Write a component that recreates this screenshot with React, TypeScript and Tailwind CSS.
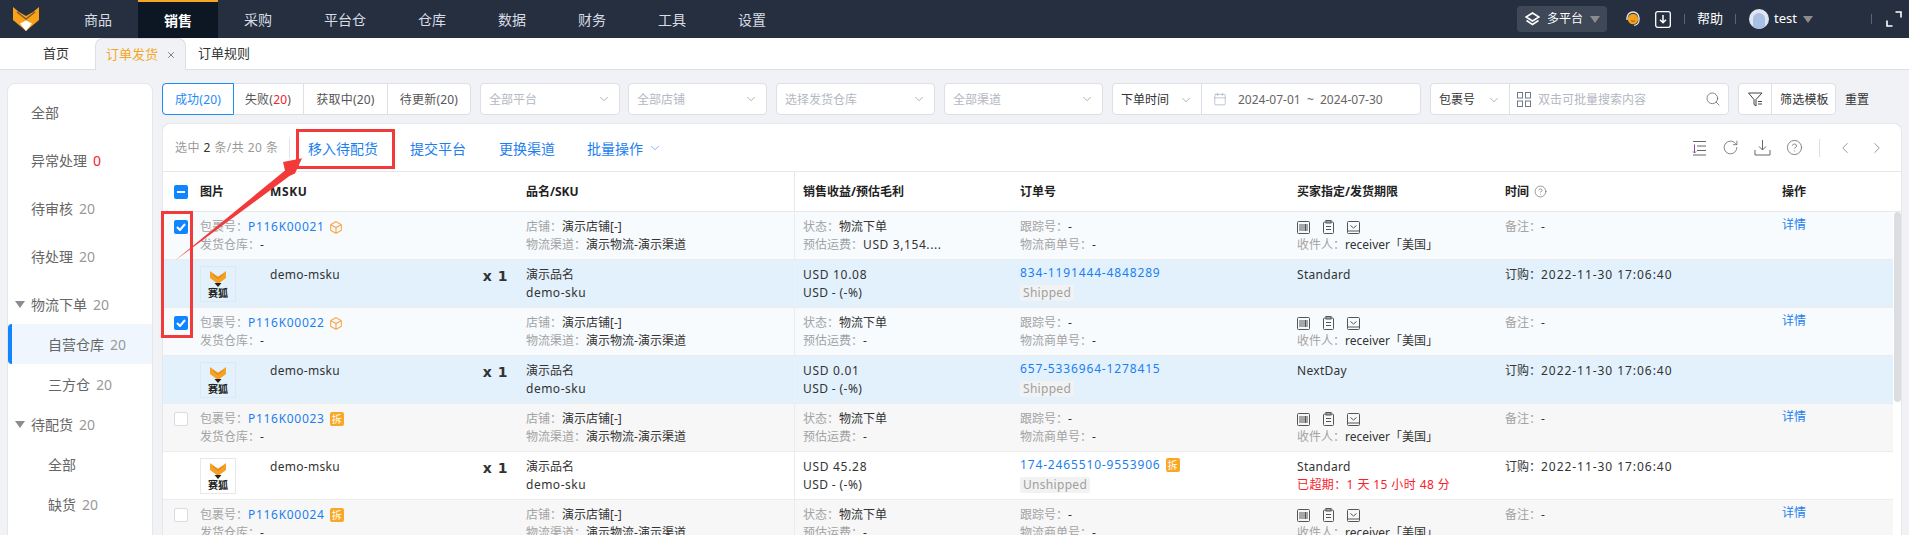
import React from "react";
import { ChevronDown, ChevronLeft, ChevronRight, Search, Calendar, RotateCw, CircleHelp, X } from "lucide-react";

const font = { fontFamily: '"Noto Sans", "Noto Sans CJK SC", sans-serif' };

function Fox() {
  return (
    <svg width="26" height="24" viewBox="0 0 26 24">
      <path d="M0 0L6 5L13 9L20 5L26 0V13L13 24L0 13Z" fill="#f9a11b" />
      <path d="M4 5L13 12L22 5" fill="none" stroke="#7d5a2a" strokeWidth="1.4" />
      <path d="M7 16.5L13 13.5L19 16.5L13 24Z" fill="#fff" />
    </svg>
  );
}

function SmallFox() {
  return (
    <svg width="16" height="16" viewBox="0 0 16 16">
      <path d="M0 0L4 3L8 5.5L12 3L16 0V7L8 13L0 7Z" fill="#f7a023" />
      <path d="M2.5 3L8 7.5L13.5 3" fill="none" stroke="#c9801c" strokeWidth="0.8" />
      <path d="M4.5 12H11.5L8 16Z" fill="#222" />
    </svg>
  );
}

function Caret({ color = "#8c8c8c", size = 10 }: { color?: string; size?: number }) {
  return (
    <svg width={size} height={size * 0.7} viewBox="0 0 10 7">
      <path d="M0 0H10L5 7Z" fill={color} />
    </svg>
  );
}

const navItems = ["商品", "销售", "采购", "平台仓", "仓库", "数据", "财务", "工具", "设置"];

function TopBar() {
  return (
    <div className="h-[38px] bg-[#252f40] flex items-center shrink-0">
      <div className="w-[58px] h-full flex items-center pl-[13px] shrink-0">
        <Fox />
      </div>
      {navItems.map((n) => (
        <div
          key={n}
          className={
            n === "销售"
              ? "h-full px-[26px] flex items-center text-[14px] font-bold text-white bg-[#0d1724] border-t-2 border-[#f5a623]"
              : "h-full px-[26px] flex items-center text-[14px] text-[#d8dce3]"
          }
        >
          {n}
        </div>
      ))}
      <div className="flex-1" />
      <div className="w-[90px] h-[26px] rounded bg-[#3f4857] flex items-center pl-2 gap-[7px] text-[12px] text-white">
        <svg width="15" height="15" viewBox="0 0 15 15" fill="none" stroke="#fff" strokeWidth="1.6">
          <path d="M7.5 1L14 5L7.5 9L1 5Z" />
          <path d="M1.5 8.5L7.5 12.5L13.5 8.5" />
          <path d="M4.5 7.5V6.5" />
        </svg>
        <span>多平台</span>
        <Caret />
      </div>
      <svg className="ml-[18px]" width="16" height="18" viewBox="0 0 16 18" fill="none">
        <circle cx="8" cy="9" r="5.2" fill="#f5a01c" />
        <path d="M2 10V8a6 6 0 0 1 12 0v2" stroke="#e8e8e8" strokeWidth="1.4" />
        <path d="M14 10c0 3-2 5-5 5.5" stroke="#e8e8e8" strokeWidth="1.2" />
        <path d="M6 10.5c1 1 3 1 4 0" stroke="#7a4a00" strokeWidth="0.8" />
      </svg>
      <svg className="ml-[14px]" width="16" height="17" viewBox="0 0 16 17" fill="none" stroke="#fff">
        <rect x="0.7" y="0.7" width="14.6" height="15.6" rx="2" strokeWidth="1.3" />
        <path d="M8 4V11.5M5 8.7L8 11.7L11 8.7" strokeWidth="1.5" />
      </svg>
      <div className="ml-[13px] w-px h-[10px] bg-[#5a6473]" />
      <span className="ml-3 text-[13px] text-white">帮助</span>
      <div className="ml-3 w-px h-[10px] bg-[#5a6473]" />
      <div className="ml-[13px] w-[20px] h-[20px] rounded-full bg-[#dfe6f2] flex items-end justify-center overflow-hidden">
        <div className="w-3 h-[16px] rounded-t-full bg-[#a9c0e4]" />
      </div>
      <span className="ml-[5px] text-[13px] text-white">test</span>
      <span className="ml-[6px]">
        <Caret />
      </span>
      <div className="ml-[58px] w-px h-[10px] bg-[#5a6473]" />
      <svg className="ml-[14px] mr-[7px]" width="16" height="16" viewBox="0 0 16 16" fill="none" stroke="#fff" strokeWidth="1.6">
        <path d="M9.5 1H15V6.5M1 9.5V15H6.5" />
      </svg>
    </div>
  );
}

function Tabs() {
  return (
    <div className="h-[32px] bg-white border-b border-[#dcdfe6] flex items-end text-[13px] text-[#333] shrink-0">
      <div className="w-[95px] h-full flex items-center pl-[43px] pt-px">首页</div>
      <div className="w-[91px] h-[32px] -mb-px border border-b-0 border-[#dcdfe6] rounded-t-lg bg-[#f1f2f6] flex items-center pl-[10px] pt-px gap-[8px] text-[#f5a623]">
        <span>订单发货</span>
        <X size={10} color="#666" strokeWidth={2} />
      </div>
      <div className="h-full flex items-center pl-3 pt-px">订单规则</div>
    </div>
  );
}

const side: { t: string; n: string; lv: number; tri?: boolean; red?: boolean; active?: boolean }[] = [
  { t: "全部", n: "", lv: 0 },
  { t: "异常处理", n: "0", lv: 0, red: true },
  { t: "待审核", n: "20", lv: 0 },
  { t: "待处理", n: "20", lv: 0 },
  { t: "物流下单", n: "20", lv: 0, tri: true },
  { t: "自营仓库", n: "20", lv: 1, active: true },
  { t: "三方仓", n: "20", lv: 1 },
  { t: "待配货", n: "20", lv: 0, tri: true },
  { t: "全部", n: "", lv: 1 },
  { t: "缺货", n: "20", lv: 1 },
];

function Sidebar() {
  return (
    <div className="w-[146px] shrink-0 h-[500px] bg-white border border-[#e6e7eb] rounded-t-lg pt-[4px] text-[14px] text-[#666]">
      {side.map((s, i) => (
        <div
          key={i}
          className={
            (i < 4 ? "h-[48px] " : i === 4 ? "h-[44px] pt-[4px] " : "h-[40px] ") +
            (s.active ? "bg-[#eff6fd] border-l-4 border-[#0f86ff] rounded-l-sm pl-[36px] " : s.lv ? "pl-[40px] " : s.tri ? "pl-[7px] " : "pl-[23px] ") +
            "flex items-center"
          }
        >
          {s.tri && (
            <span className="mr-[6px]">
              <Caret size={10} />
            </span>
          )}
          <span>{s.t}</span>
          {s.n && <span className={s.red ? "ml-[6px] text-[#f5222d]" : "ml-[6px] text-[#999]"}>{s.n}</span>}
        </div>
      ))}
    </div>
  );
}

function Select({ label, w, dark }: { label: string; w: string; dark?: boolean }) {
  return (
    <div className={w + " h-8 bg-white border border-[#dcdfe6] rounded flex items-center justify-between px-2 text-[12px] shrink-0"}>
      <span className={"pt-px " + (dark ? "text-[#333]" : "text-[#b4b8bf]")}>{label}</span>
      <ChevronDown size={14} color="#9a9a9a" strokeWidth={1.3} />
    </div>
  );
}

function Filters() {
  const seg = [
    { a: "成功(", b: "20", c: ")", w: "w-[72px]", on: true },
    { a: "失败(", b: "20", c: ")", w: "w-[70px]", red: true },
    { a: "获取中(", b: "20", c: ")", w: "w-[84px]" },
    { a: "待更新(", b: "20", c: ")", w: "w-[83px]" },
  ];
  return (
    <div className="h-8 flex items-center text-[12px] shrink-0">
      <div className="flex h-8 bg-white rounded border border-[#dcdfe6] w-[309px] shrink-0">
        {seg.map((s, i) => (
          <div
            key={i}
            className={
              s.w +
              " flex items-center justify-center pt-px tracking-[0.2px] " +
              (s.on ? "-m-px h-8 border border-[#1c8cf7] rounded-l text-[#1c8cf7] " : "border-l border-[#dcdfe6] text-[#555] ") +
              (i === 1 ? "border-l-0 " : "")
            }
          >
            {s.a}
            <span className={s.red ? "text-[#f5222d]" : ""}>{s.b}</span>
            {s.c}
          </div>
        ))}
      </div>
      <div className="ml-[9px]">
        <Select label="全部平台" w="w-[140px]" />
      </div>
      <div className="ml-[8px]">
        <Select label="全部店铺" w="w-[139px]" />
      </div>
      <div className="ml-[9px]">
        <Select label="选择发货仓库" w="w-[159px]" />
      </div>
      <div className="ml-[9px]">
        <Select label="全部渠道" w="w-[159px]" />
      </div>
      <div className="ml-[9px] w-[309px] h-8 bg-white border border-[#dcdfe6] rounded flex shrink-0 items-center">
        <div className="w-[89px] h-full flex items-center justify-between px-2 pt-px border-r border-[#dcdfe6] text-[#333]">
          <span>下单时间</span>
          <ChevronDown size={14} color="#9a9a9a" strokeWidth={1.3} />
        </div>
        <Calendar className="ml-[11px]" size={14} color="#9fb0bf" strokeWidth={1.2} />
        <span className="ml-[11px] pt-px text-[#666] whitespace-nowrap">2024-07-01&nbsp; ~&nbsp; 2024-07-30</span>
      </div>
      <div className="ml-[9px] w-[299px] h-8 bg-white border border-[#dcdfe6] rounded flex shrink-0 items-center">
        <div className="w-[79px] h-full flex items-center justify-between px-2 pt-px border-r border-[#dcdfe6] text-[#333]">
          <span>包裹号</span>
          <ChevronDown size={14} color="#9a9a9a" strokeWidth={1.3} />
        </div>
        <svg className="ml-[7px]" width="14" height="15" viewBox="0 0 14 15" fill="none" stroke="#6f7a8a">
          <rect x="0.5" y="0.5" width="5" height="5.5" />
          <rect x="8.5" y="0.5" width="5" height="5.5" />
          <rect x="0.5" y="9" width="5" height="5.5" />
          <rect x="8.5" y="9" width="5" height="5.5" />
        </svg>
        <span className="ml-[7px] pt-px text-[#b4b8bf] flex-1">双击可批量搜索内容</span>
        <Search className="mr-[7px]" size={16} color="#666" strokeWidth={1.2} />
      </div>
      <div className="ml-[9px] w-[98px] h-8 bg-white border border-[#dcdfe6] rounded flex shrink-0 items-center">
        <div className="w-[33px] h-full flex items-center justify-center border-r border-[#dcdfe6]">
          <svg width="15" height="15" viewBox="0 0 15 15" fill="none" stroke="#444">
            <path d="M0.5 1H14L8 7.5V14L6 12.5V7.5Z" />
            <path d="M10 9.5H14M10 12H14" />
          </svg>
        </div>
        <span className="pl-2 pt-px text-[#333] tracking-[0.2px]">筛选模板</span>
      </div>
      <span className="ml-[9px] pt-px text-[#333]">重置</span>
    </div>
  );
}

function Toolbar() {
  const link = "text-[#1c7ff0] text-[14px] whitespace-nowrap pt-px";
  return (
    <div className="h-[48px] border-b border-[#e8e8e8] flex items-center text-[12px] shrink-0">
      <span className="ml-[12px] pt-px text-[#999] w-[114px] whitespace-nowrap tracking-[0.45px]">
        选中 <span className="text-[#333]">2</span> 条/共 20 条
      </span>
      <div className="w-px h-[20px] bg-[#e5e5e5]" />
      <span className={"ml-[18px] w-[70px] " + link}>移入待配货</span>
      <span className={"ml-[32px] w-[56px] " + link}>提交平台</span>
      <span className={"ml-[33px] w-[56px] " + link}>更换渠道</span>
      <span className={"ml-[32px] w-[56px] " + link}>批量操作</span>
      <ChevronDown className="ml-[5px]" size={14} color="#5a9bf0" strokeWidth={1.3} />
      <div className="flex-1" />
      <svg width="15" height="16" viewBox="0 0 15 16" fill="none" stroke="#666">
        <path d="M1 1.5H14M5 6H14M5 10.5H14M1 15H14" />
        <path d="M2.5 4.5V13M1 11.5L2.5 13L4 11.5" stroke="#8a4a9a" />
      </svg>
      <RotateCw className="ml-[15px]" size={17} color="#666" strokeWidth={1.1} />
      <svg className="ml-[15px]" width="17" height="17" viewBox="0 0 17 17" fill="none" stroke="#666">
        <path d="M8.5 1V11M5 7.5L8.5 11L12 7.5" />
        <path d="M1 11V16H16V11" />
      </svg>
      <CircleHelp className="ml-[15px]" size={17} color="#666" strokeWidth={1.1} />
      <div className="ml-[16px] w-px h-[18px] bg-[#ddd]" />
      <ChevronLeft className="ml-[16px]" size={18} color="#777" strokeWidth={1} />
      <ChevronRight className="ml-[14px] mr-[15px]" size={18} color="#777" strokeWidth={1} />
    </div>
  );
}

const COLS = "grid grid-cols-[37px_70px_256px_268px_226px_277px_208px_277px_1fr]";

function CheckBox({ state }: { state: "on" | "off" | "mix" }) {
  if (state === "off")
    return <div className="w-[14px] h-[14px] bg-white border border-[#d9dce3] rounded-[2px]" />;
  return (
    <div className="w-[14px] h-[14px] bg-[#0f86ff] rounded-[2px] flex items-center justify-center">
      {state === "on" ? (
        <svg width="10" height="8" viewBox="0 0 10 8" fill="none" stroke="#fff" strokeWidth="2">
          <path d="M1 4L4 7L9 1" />
        </svg>
      ) : (
        <div className="w-2 h-[2px] bg-white" />
      )}
    </div>
  );
}

function Chai() {
  return <span className="inline-flex w-[14px] h-[14px] rounded-[2px] bg-[#f9a825] text-white text-[10px] leading-none items-center justify-center tracking-normal">拆</span>;
}

function L({ k, v, cls }: { k: string; v: string; cls?: string }) {
  return (
    <div className="h-[18px] leading-[18px] whitespace-nowrap">
      <span className="text-[#a3a3a3]">{k}：</span>
      <span className={"text-[#333] " + (cls || "")}>{v}</span>
    </div>
  );
}

function HeaderRow() {
  const th = "flex items-center font-bold text-[#222]";
  return (
    <div className={COLS + " h-[40px] border-b border-[#e8e8e8] text-[12px] shrink-0"}>
      <div className="flex items-center pl-[11px]">
        <CheckBox state="mix" />
      </div>
      <div className={th}>图片</div>
      <div className={th + " tracking-[0.6px]"}>MSKU</div>
      <div className={th}>品名/SKU</div>
      <div className={th + " border-l border-[#e8e8e8] pl-[8px]"}>销售收益/预估毛利</div>
      <div className={th}>订单号</div>
      <div className={th}>买家指定/发货期限</div>
      <div className={th + " gap-[5px]"}>
        时间 <CircleHelp size={13} color="#666" strokeWidth={1.2} />
      </div>
      <div className={th}>操作</div>
    </div>
  );
}

function MiniIcons() {
  return (
    <div className="h-[18px] flex items-center gap-[13px]">
      <svg width="13" height="13" viewBox="0 0 13 13" fill="none" stroke="#555">
        <rect x="0.5" y="0.5" width="12" height="12" rx="1" />
        <path d="M3 3V10M5 3V10M7 3V10M8.5 3V10M10 3V10" />
      </svg>
      <svg width="11" height="14" viewBox="0 0 11 14" fill="none" stroke="#555">
        <rect x="0.5" y="2" width="10" height="11.5" rx="1" />
        <rect x="3" y="0.5" width="5" height="2.5" />
        <path d="M3 6.5H8M3 9.5H8" />
      </svg>
      <svg width="13" height="13" viewBox="0 0 13 13" fill="none" stroke="#555">
        <rect x="0.5" y="0.5" width="12" height="12" rx="1" />
        <path d="M3.5 4.5L6.5 7L9.5 4.5M0.5 10H12.5" />
      </svg>
    </div>
  );
}

function Cube() {
  return (
    <svg className="ml-[5px]" width="12" height="13" viewBox="0 0 12 13" fill="none" stroke="#f7a84e" strokeWidth="1.1">
      <path d="M6 0.7L11.3 3.6V9.4L6 12.3L0.7 9.4V3.6Z" />
      <path d="M0.9 3.7L6 6.5L11.1 3.7M6 6.5V12" />
    </svg>
  );
}

function GroupRow({ no, sel, icon, freight }: { no: string; sel: boolean; icon: "box" | "chai"; freight: string }) {
  return (
    <div className={COLS + " h-[48px] border-b border-[#ececec] pt-[6px] text-[12px] " + (sel ? "bg-[#f8fbfe]" : "bg-[#f7f7f7]")}>
      <div className="pl-[11px] pt-[2px]">
        <CheckBox state={sel ? "on" : "off"} />
      </div>
      <div className="col-span-2">
        <div className="h-[18px] flex items-center whitespace-nowrap">
          <span className="text-[#a3a3a3]">包裹号：</span>
          <span className="text-[#1c7ff0] tracking-[0.7px]">{no}</span>
          {icon === "box" ? (
            <Cube />
          ) : (
            <span className="ml-[5px]">
              <Chai />
            </span>
          )}
        </div>
        <L k="发货仓库" v="-" />
      </div>
      <div>
        <L k="店铺" v="演示店铺[-]" />
        <L k="物流渠道" v="演示物流-演示渠道" />
      </div>
      <div className="border-l border-[#ececec] -mt-[6px] pt-[6px] pl-[8px]">
        <L k="状态" v="物流下单" />
        <L k="预估运费" v={freight} cls="tracking-[0.6px]" />
      </div>
      <div>
        <L k="跟踪号" v="-" />
        <L k="物流商单号" v="-" />
      </div>
      <div>
        <MiniIcons />
        <L k="收件人" v="receiver「美国」" />
      </div>
      <div>
        <L k="备注" v="-" />
      </div>
      <div className="text-[#1c7ff0] -mt-[2px]">详情</div>
    </div>
  );
}

function ChildRow({
  sel,
  usd,
  order,
  status,
  chai,
  ship,
  late,
}: {
  sel: boolean;
  usd: string;
  order: string;
  status: string;
  chai?: boolean;
  ship: string;
  late?: boolean;
}) {
  return (
    <div className={COLS + " h-[48px] border-b border-[#ececec] text-[12px] text-[#333] " + (sel ? "bg-[#e2f1fc]" : "bg-white")}>
      <div />
      <div className="pt-[6px]">
        <div className={"w-[36px] h-[36px] border flex flex-col items-center pt-[4px] " + (sel ? "border-[#dde9f2]" : "border-[#e8e8e8] bg-white")}>
          <SmallFox />
          <span className="text-[10px] leading-[12px] font-bold text-[#222]">赛狐</span>
        </div>
      </div>
      <div className="flex justify-between pt-[6px] pr-[18px]">
        <span className="leading-[18px] tracking-[0.3px]">demo-msku</span>
        <span className="font-bold text-[14px] leading-[20px] tracking-[0.5px]" style={{ fontFamily: '"DejaVu Sans", sans-serif' }}>
          x 1
        </span>
      </div>
      <div className="pt-[6px] leading-[18px]">
        <div>演示品名</div>
        <div className="tracking-[0.5px]">demo-sku</div>
      </div>
      <div className={"border-l pt-[6px] pl-[8px] leading-[18px] " + (sel ? "border-[#eaf3fa]" : "border-[#ececec]")}>
        <div className="tracking-[0.7px]">{usd}</div>
        <div className="tracking-[0.4px]">USD - (-%)</div>
      </div>
      <div className="pt-[4px]">
        <div className="h-[18px] leading-[18px] flex items-center gap-[5px] text-[#1c7ff0] tracking-[0.85px]">
          {order}
          {chai && <Chai />}
        </div>
        <div className="mt-[2px]">
          <span className="inline-block h-[16px] leading-[16px] px-[3px] rounded-[2px] bg-[#f2f2f2] text-[#a0a0a0] tracking-[0.3px]">{status}</span>
        </div>
      </div>
      <div className="pt-[6px] leading-[18px] whitespace-nowrap">
        <div className="tracking-[0.3px]">{ship}</div>
        {late && <div className="text-[#f5222d] tracking-[0.4px]">已超期：1 天 15 小时 48 分</div>}
      </div>
      <div className="pt-[6px] leading-[18px] whitespace-nowrap">
        订购：<span className="tracking-[0.95px]">2022-11-30 17:06:40</span>
      </div>
      <div />
    </div>
  );
}

function Table() {
  return (
    <div className="relative flex-1">
      <HeaderRow />
      <div className="pr-[8px]">
        <GroupRow no="P116K00021" sel icon="box" freight="USD 3,154...." />
        <ChildRow sel usd="USD 10.08" order="834-1191444-4848289" status="Shipped" ship="Standard" />
        <GroupRow no="P116K00022" sel icon="box" freight="-" />
        <ChildRow sel usd="USD 0.01" order="657-5336964-1278415" status="Shipped" ship="NextDay" />
        <GroupRow no="P116K00023" sel={false} icon="chai" freight="-" />
        <ChildRow sel={false} usd="USD 45.28" order="174-2465510-9553906" chai status="Unshipped" ship="Standard" late />
        <GroupRow no="P116K00024" sel={false} icon="chai" freight="-" />
      </div>
      <div className="absolute right-0 top-[40px] w-[7px] h-[190px] bg-[#dcdde1] rounded-sm" />
    </div>
  );
}

function Annotations() {
  return (
    <>
      <div className="absolute left-[296px] top-[129px] w-[99px] h-[40px] border-[3px] border-[#f33a3a]" />
      <div className="absolute left-[161px] top-[211px] w-[32px] h-[127px] border-[3px] border-[#f33a3a]" />
      <svg className="absolute left-0 top-0 pointer-events-none" width="320" height="280">
        <polygon points="175,260.5 285,170.5 283,162 302,158.3 295,173.5 289.5,176" fill="#f33a3a" />
      </svg>
    </>
  );
}

export default function App() {
  return (
    <div className="relative w-[1909px] h-[535px] overflow-hidden bg-[#f1f2f6] flex flex-col" style={font}>
      <TopBar />
      <Tabs />
      <div className="flex flex-1 pl-[7px] pt-[13px] gap-[9px] min-h-0">
        <Sidebar />
        <div className="w-[1740px] flex flex-col gap-2">
          <Filters />
          <div className="bg-white border border-[#e6e7eb] border-b-0 rounded-t-lg flex flex-col flex-1 overflow-hidden">
            <Toolbar />
            <Table />
          </div>
        </div>
      </div>
      <Annotations />
    </div>
  );
}
